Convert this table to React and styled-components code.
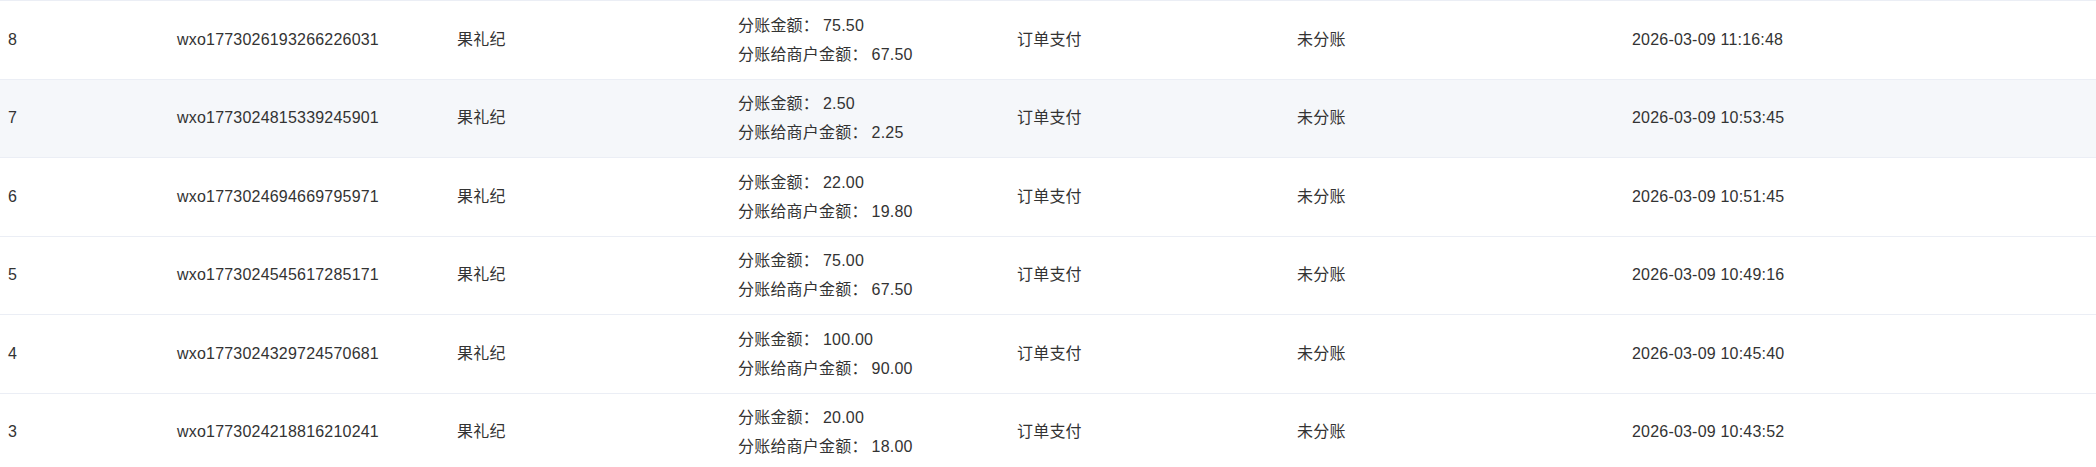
import React from "react"
import styled, { createGlobalStyle } from "styled-components"

const GlobalStyle = createGlobalStyle`
  html, body {
    margin: 0;
    padding: 0;
    background: #ffffff;
  }
  body {
    font-family: "Liberation Sans", Arial, "Noto Sans CJK SC", sans-serif;
  }
`

const Table = styled.div`
  width: 100%;
  border-top: 1px solid #ebeef5;
  color: #333333;
  font-size: 16px;
  letter-spacing: 0.2px;
`

const Row = styled.div`
  display: grid;
  grid-template-columns: 169px 280px 281px 279px 280px 335px 1fr;
  align-items: center;
  height: 77.5px;
  border-bottom: 1px solid #ebeef5;
  background: ${(p) => (p.$active ? "#f5f7fa" : "#ffffff")};
`

const Cell = styled.div`
  padding-left: 8px;
  white-space: nowrap;
  line-height: 20px;
`

const AmountCell = styled(Cell)`
  line-height: 29px;
`

const Value = styled.span`
  margin-left: 4px;
`

const rows = [
  { id: 8, no: "wxo1773026193266226031", amount: "75.50", merchant: "67.50", time: "2026-03-09 11:16:48" },
  { id: 7, no: "wxo1773024815339245901", amount: "2.50", merchant: "2.25", time: "2026-03-09 10:53:45" },
  { id: 6, no: "wxo1773024694669795971", amount: "22.00", merchant: "19.80", time: "2026-03-09 10:51:45" },
  { id: 5, no: "wxo1773024545617285171", amount: "75.00", merchant: "67.50", time: "2026-03-09 10:49:16" },
  { id: 4, no: "wxo1773024329724570681", amount: "100.00", merchant: "90.00", time: "2026-03-09 10:45:40" },
  { id: 3, no: "wxo1773024218816210241", amount: "20.00", merchant: "18.00", time: "2026-03-09 10:43:52" },
]

// row 7 is the hovered one in the screenshot
const activeId = 7

const App = () => {
  return (
    <>
      <GlobalStyle />
      <Table>
        {rows.map((r) => (
          <Row key={r.id} $active={r.id === activeId}>
            <Cell>{r.id}</Cell>
            <Cell>{r.no}</Cell>
            <Cell>果礼纪</Cell>
            <AmountCell>
              <div>
                分账金额：<Value>{r.amount}</Value>
              </div>
              <div>
                分账给商户金额：<Value>{r.merchant}</Value>
              </div>
            </AmountCell>
            <Cell>订单支付</Cell>
            <Cell>未分账</Cell>
            <Cell>{r.time}</Cell>
          </Row>
        ))}
      </Table>
    </>
  )
}

export default App
